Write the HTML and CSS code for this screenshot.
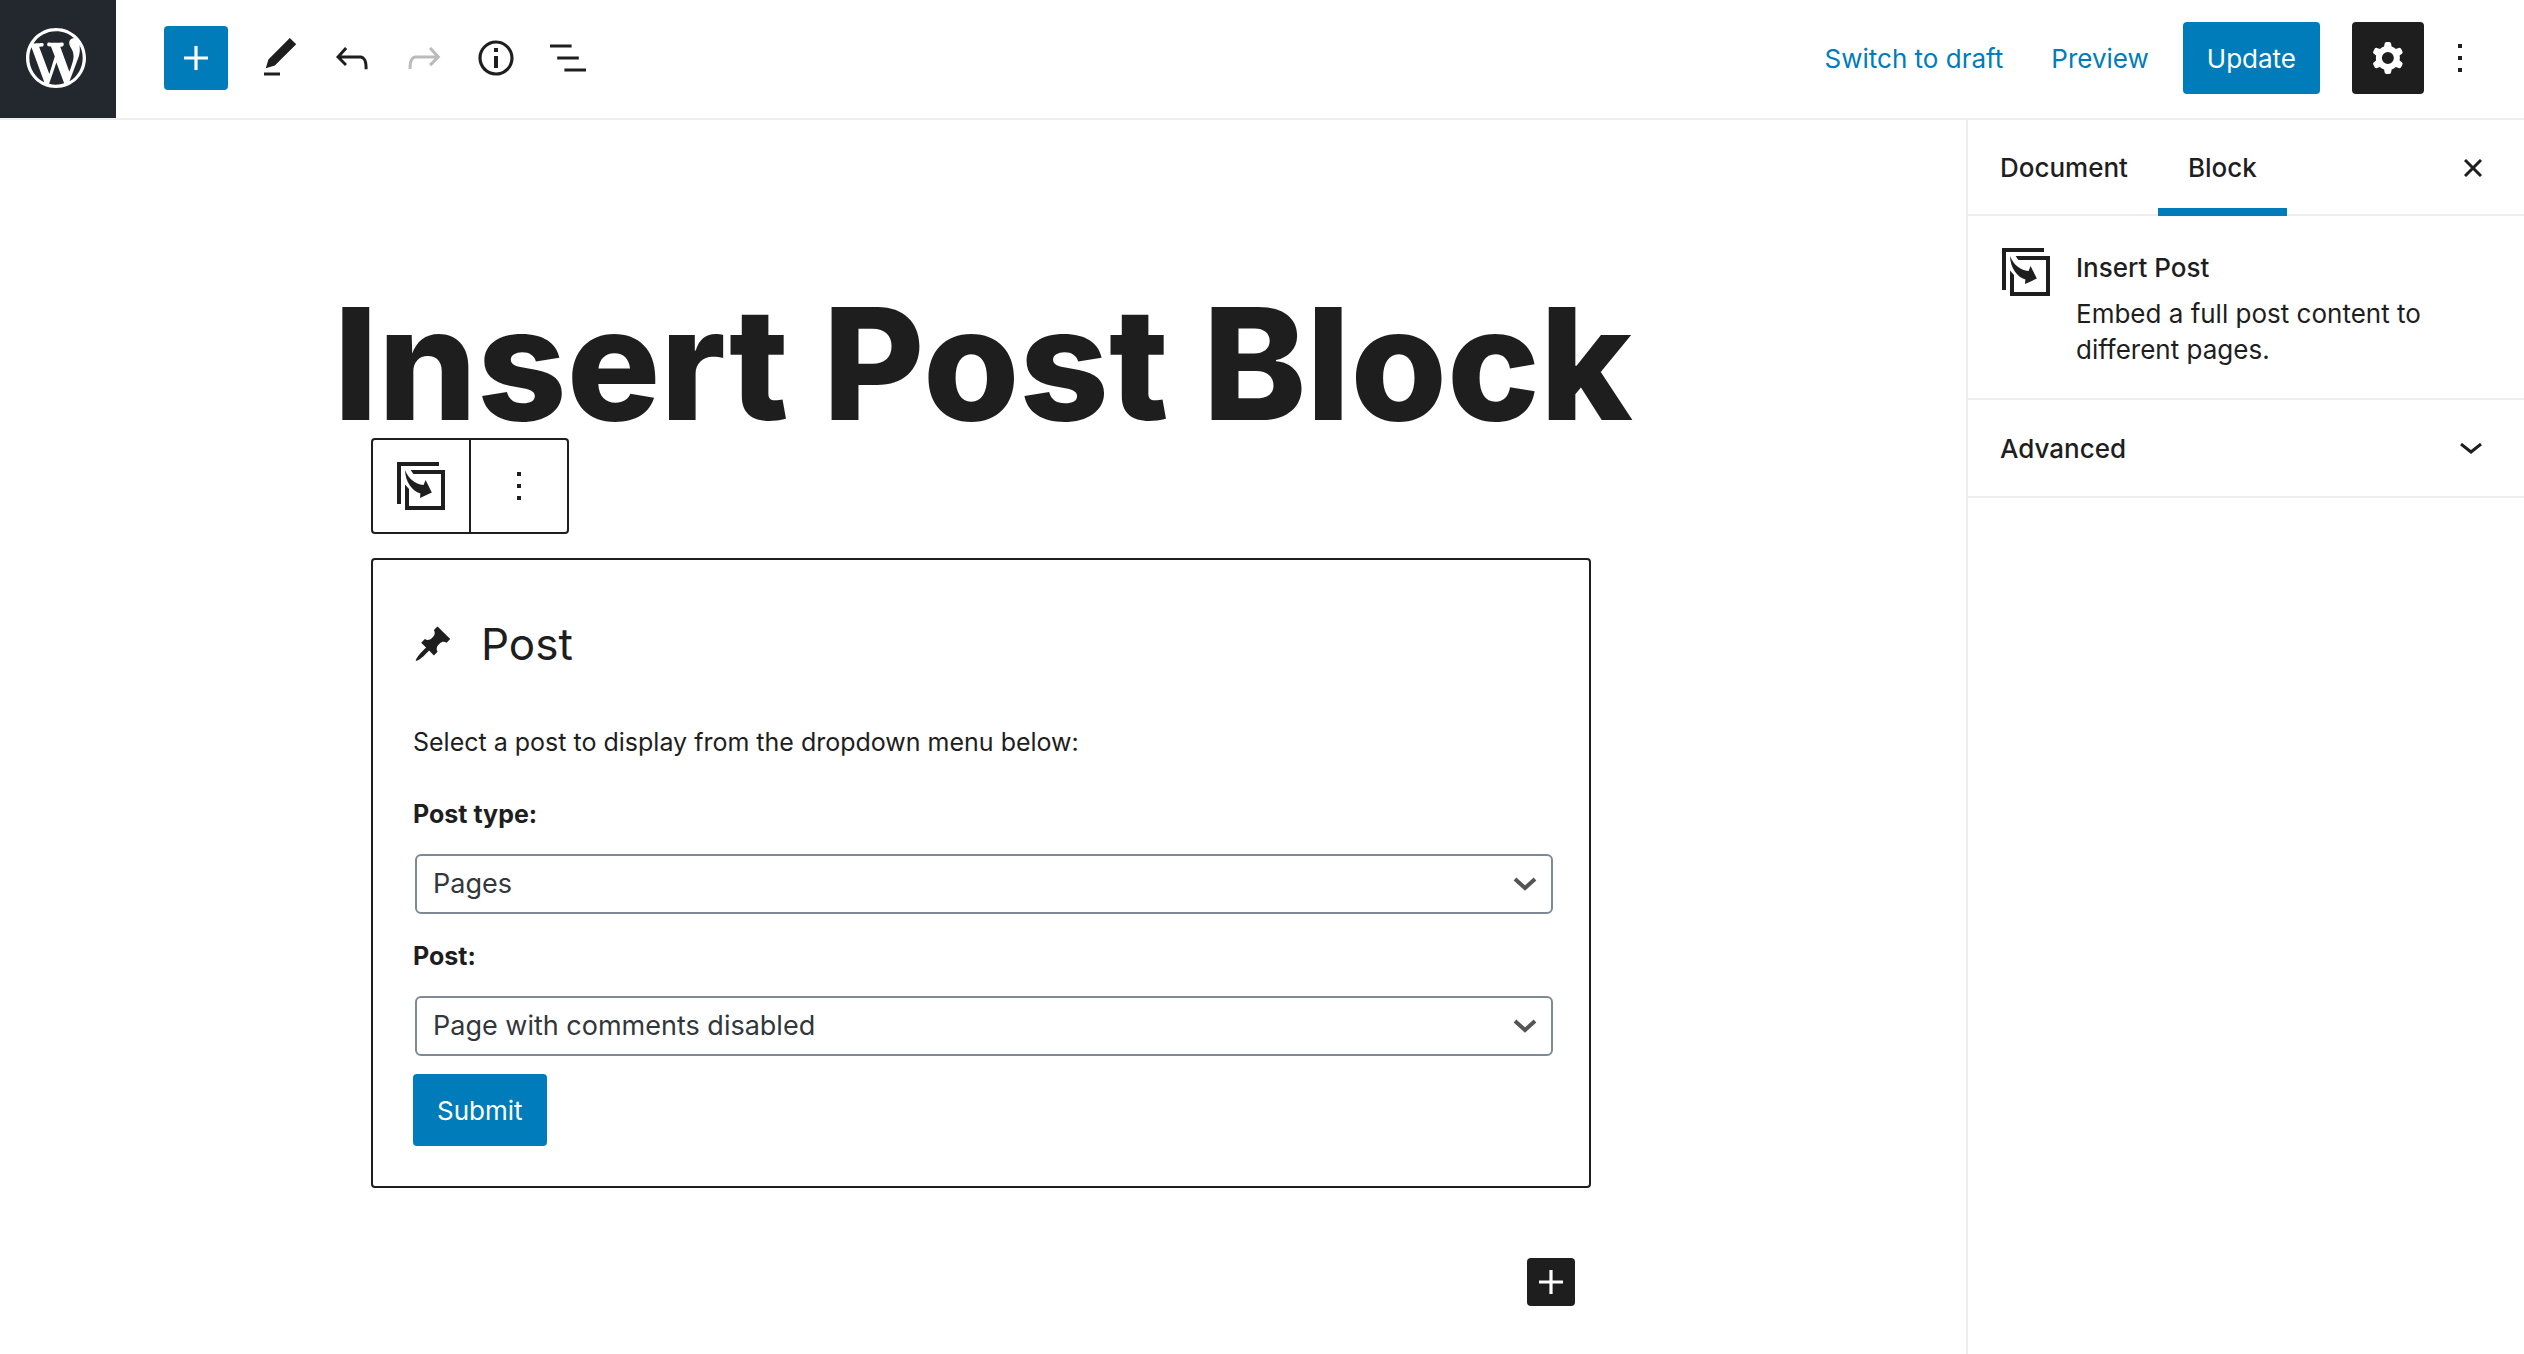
FILE: index.html
```html
<!DOCTYPE html>
<html lang="en">
<head>
<meta charset="utf-8">
<title>Edit Page</title>
<link rel="stylesheet" href="styles.css">
</head>
<body>
<svg class="sprite" aria-hidden="true">
  <symbol id="plus" viewBox="0 0 24 24"><path d="M18 11.2h-5.2V6h-1.6v5.2H6v1.6h5.2V18h1.6v-5.2H18z"/></symbol>
  <symbol id="dots" viewBox="0 0 24 24"><path d="M13 19h-2v-2h2v2zm0-6h-2v-2h2v2zm0-6h-2V5h2v2z"/></symbol>
  <symbol id="insert-post" viewBox="0 0 24 24">
    <path d="M0 0h21v2H2v19H0z"/>
    <path d="M6.8 4H24v20H4V11.300l2 2.200V22h16V6H8.200z"/>
    <path d="M4 4c1.700 4.300 4.800 7 9.300 7.500l1-2.500 3.100 6.300-5.900 2.700.2-2.300C7.500 14.500 4.200 10 4 4z"/>
  </symbol>
</svg>
<header class="header">
  <a class="logo" href="#" aria-label="View pages">
    <svg viewBox="-2 -2 24 24"><path d="M20 10c0-5.510-4.490-10-10-10C4.480 0 0 4.490 0 10c0 5.520 4.480 10 10 10 5.510 0 10-4.480 10-10zM7.780 15.370L4.370 6.220c.55-.02 1.170-.08 1.170-.08.5-.06.44-1.130-.06-1.110 0 0-1.450.11-2.370.11-.18 0-.37 0-.58-.01C4.120 2.690 6.870 1.110 10 1.110c2.330 0 4.450.87 6.050 2.340-.68-.11-1.650.39-1.650 1.580 0 .74.45 1.360.9 2.100.35.61.55 1.360.55 2.460 0 1.490-1.400 5-1.400 5l-3.030-8.370c.54-.02.82-.17.82-.17.5-.05.44-1.250-.06-1.220 0 0-1.440.12-2.380.12-.87 0-2.330-.12-2.330-.12-.5-.03-.56 1.200-.06 1.220l.92.08 1.260 3.410zM17.410 10c.24-.64.74-1.870.43-4.250.7 1.290 1.050 2.710 1.050 4.250 0 3.290-1.730 6.240-4.400 7.780.97-2.590 1.940-5.200 2.920-7.780zM6.100 18.090C3.120 16.650 1.110 13.530 1.110 10c0-1.300.23-2.480.72-3.590C3.250 10.300 4.670 14.200 6.100 18.090zm4.030-6.630l2.580 6.980c-.86.29-1.760.45-2.710.45-.79 0-1.570-.11-2.290-.33.81-2.380 1.620-4.740 2.420-7.100z"/></svg>
  </a>
  <div class="tools">
    <button class="add" aria-label="Add block"><svg class="icon"><use href="#plus"/></svg></button>
    <button class="tool" aria-label="Tools"><svg class="icon" viewBox="0 0 24 24"><path d="M20.100 5.100L16.900 2 6.200 12.700l-1.300 4.400 4.500-1.300L20.100 5.100zM4 20.800h8v-1.500H4v1.500z"/></svg></button>
    <button class="tool" aria-label="Undo"><svg class="icon" viewBox="0 0 24 24"><path d="M18.300 11.700c-.6-.6-1.400-.9-2.300-.9H6.700l2.900-3.300-1.100-1-4.500 5L8.500 16l1-1-2.700-2.700H16c.5 0 .9.2 1.300.5 1 1 1 3.400 1 4.500v.3h1.500v-.2c0-1.500 0-4.300-1.500-5.700z"/></svg></button>
    <button class="tool" aria-label="Redo" disabled><svg class="icon" viewBox="0 0 24 24"><path d="M15.600 6.500l-1.100 1 2.900 3.300H8c-.9 0-1.700.3-2.300.9-1.400 1.500-1.400 4.200-1.400 5.600v.2h1.500v-.3c0-1.100 0-3.500 1-4.500.3-.3.7-.5 1.300-.5h9.200L14.500 15l1.100 1.100 4.600-4.600-4.600-5z"/></svg></button>
    <button class="tool" aria-label="Content structure"><svg class="icon" viewBox="0 0 24 24"><path d="M12 3.200c-4.800 0-8.800 3.900-8.800 8.800 0 4.800 3.900 8.800 8.800 8.800 4.800 0 8.800-3.900 8.800-8.800 0-4.800-4-8.800-8.800-8.800zm0 16c-4 0-7.200-3.300-7.200-7.200C4.800 8 8 4.800 12 4.800s7.200 3.300 7.200 7.200c0 4-3.200 7.200-7.200 7.200zM11 17h2v-6h-2v6zm0-8h2V7h-2v2z"/></svg></button>
    <button class="tool" aria-label="Block navigation"><svg class="icon" viewBox="0 0 24 24"><path d="M13.800 5.200H3v1.500h10.800V5.200zm-3.600 12v1.500H21v-1.500H10.200zm7.200-6H6.600v1.500h10.800v-1.500z"/></svg></button>
  </div>
  <div class="actions">
    <button class="text-button">Switch to draft</button>
    <button class="text-button">Preview</button>
    <button class="primary">Update</button>
    <button class="settings" aria-label="Settings"><svg class="icon" viewBox="0 0 24 24"><path fill-rule="evenodd" d="M10.289 4.836A1 1 0 0111.275 4h1.306a1 1 0 01.987.836l.244 1.466c.787.26 1.503.679 2.108 1.218l1.393-.522a1 1 0 011.216.437l.653 1.130a1 1 0 01-.23 1.273l-1.148.944a6.025 6.025 0 010 2.435l1.149.946a1 1 0 01.23 1.272l-.653 1.130a1 1 0 01-1.216.437l-1.394-.522c-.605.54-1.320.958-2.108 1.218l-.244 1.466a1 1 0 01-.987.836h-1.306a1 1 0 01-.986-.836l-.244-1.466a5.995 5.995 0 01-2.108-1.218l-1.394.522a1 1 0 01-1.217-.436l-.653-1.131a1 1 0 01.23-1.272l1.149-.946a6.026 6.026 0 010-2.435l-1.148-.944a1 1 0 01-.23-1.272l.653-1.131a1 1 0 011.217-.437l1.393.522a5.994 5.994 0 012.108-1.218l.244-1.466zM14.929 12a3 3 0 11-6 0 3 3 0 016 0z"/></svg></button>
    <button class="tool" aria-label="More tools"><svg class="icon"><use href="#dots"/></svg></button>
  </div>
</header>
<div class="body">
  <main class="editor">
    <h1 class="title">Insert Post Block</h1>
    <div class="content">
      <div class="toolbar">
        <button class="toolbar-button" aria-label="Insert Post"><svg class="icon"><use href="#insert-post"/></svg></button>
        <button class="toolbar-button" aria-label="More options"><svg class="icon"><use href="#dots"/></svg></button>
      </div>
      <form class="block" onsubmit="return false">
        <h2 class="block-title">
          <svg class="pin" viewBox="0 0 20 20" aria-hidden="true"><path d="M10.440 3.020l1.820-1.820 6.360 6.350-1.830 1.820c-1.050-.68-2.480-.57-3.410.36l-.75.75c-.92.93-1.040 2.350-.35 3.410l-1.830 1.820-2.410-2.410-2.800 2.790c-.42.42-3.380 2.710-3.800 2.290s1.860-3.390 2.280-3.810l2.790-2.790L4.100 9.360l1.830-1.820c1.050.69 2.480.57 3.400-.36l.75-.75c.93-.92 1.050-2.350.36-3.410z"/></svg>
          <span>Post</span>
        </h2>
        <p class="hint">Select a post to display from the dropdown menu below:</p>
        <div class="field">
          <label class="label" for="post-type">Post type:</label>
          <div class="select-wrap">
            <select class="select" id="post-type"><option>Pages</option></select>
            <svg class="chevron" viewBox="0 0 24 14" aria-hidden="true"><path d="M2 2l10 9 10-9"/></svg>
          </div>
        </div>
        <div class="field">
          <label class="label" for="post">Post:</label>
          <div class="select-wrap">
            <select class="select" id="post"><option>Page with comments disabled</option></select>
            <svg class="chevron" viewBox="0 0 24 14" aria-hidden="true"><path d="M2 2l10 9 10-9"/></svg>
          </div>
        </div>
        <button class="primary">Submit</button>
      </form>
      <button class="appender" aria-label="Add block"><svg class="icon"><use href="#plus"/></svg></button>
    </div>
  </main>
  <aside class="sidebar">
    <div class="tabs">
      <button class="tab">Document</button>
      <button class="tab tab-active">Block</button>
      <button class="close" aria-label="Close settings"><svg viewBox="0 0 18 18"><path d="M1 1l16 16M17 1L1 17"/></svg></button>
    </div>
    <section class="card">
      <svg class="icon"><use href="#insert-post"/></svg>
      <div class="card-body">
        <h2 class="card-title">Insert Post</h2>
        <p>Embed a full post content to different pages.</p>
      </div>
    </section>
    <button class="panel">
      <span>Advanced</span>
      <svg viewBox="0 0 22 12"><path d="M1 1l10 8 10-8"/></svg>
    </button>
  </aside>
</div>
</body>
</html>
```
FILE: styles.css
```css
* {
  box-sizing: border-box;
}

body {
  margin: 0;
  min-height: 100vh;
  display: flex;
  flex-direction: column;
  background: #fff;
  color: #1e1e1e;
  font: 26px/36px Inter, "Liberation Sans", sans-serif;
}

h1, h2, p {
  margin: 0;
}

button {
  margin: 0;
  padding: 0;
  border: 0;
  background: none;
  color: inherit;
  font: inherit;
  cursor: pointer;
}

svg {
  display: block;
  fill: currentColor;
}

.sprite {
  position: absolute;
  width: 0;
  height: 0;
}

.icon {
  width: 48px;
  height: 48px;
  flex: none;
}

.header {
  display: flex;
  align-items: center;
  border-bottom: 2px solid #eee;
  padding-right: 28px;
}

.logo {
  padding: 22px 24px 24px 20px;
  background: #23282e;
  color: #fff;
}

.logo svg {
  width: 72px;
  height: 72px;
}

.tools,
.actions {
  display: flex;
  align-items: center;
  padding-bottom: 2px;
}

.tools {
  margin-left: 48px;
}

.actions {
  margin-left: auto;
}

.add {
  display: grid;
  place-items: center;
  width: 64px;
  height: 64px;
  margin-right: 16px;
  border-radius: 4px;
  background: #007cba;
  color: #fff;
}

.tool {
  display: grid;
  place-items: center;
  width: 72px;
  height: 72px;
}

.tool:disabled {
  color: #bbb;
}

.text-button {
  padding: 2px 24px 0;
  color: #007cba;
}

.primary {
  height: 72px;
  padding: 2px 24px 0;
  border-radius: 4px;
  background: #007cba;
  color: #fff;
}

.actions .primary {
  margin: 0 32px 0 10px;
}

.settings {
  display: grid;
  place-items: center;
  width: 72px;
  height: 72px;
  border-radius: 4px;
  background: #1e1e1e;
  color: #fff;
}

.body {
  flex: 1;
  display: flex;
}

.editor {
  flex: 1;
  display: flex;
  flex-direction: column;
  align-items: center;
  padding: 170px 0 48px;
}

.title {
  font-size: 156px;
  line-height: 148px;
  font-weight: 800;
  white-space: nowrap;
}

.content {
  width: 1220px;
  max-width: 100%;
  margin-right: 4px;
}

.toolbar {
  display: flex;
  width: 198px;
  height: 96px;
  border: 2px solid #1e1e1e;
  border-radius: 4px;
}

.toolbar-button {
  flex: 1;
  display: grid;
  place-items: center;
}

.toolbar-button + .toolbar-button {
  border-left: 2px solid #1e1e1e;
}

.block {
  margin-top: 24px;
  padding: 60px 36px 40px 40px;
  border: 2px solid #1e1e1e;
  border-radius: 4px;
  font-size: 25px;
}

.block-title {
  display: flex;
  align-items: center;
  gap: 28px;
  font-size: 44px;
  line-height: 48px;
  font-weight: 400;
}

.pin {
  width: 40px;
  height: 40px;
}

.hint {
  margin-top: 56px;
}

.hint + .field {
  margin-top: 36px;
}

.field {
  margin-top: 24px;
}

.label {
  display: block;
  font-weight: 700;
}

.select-wrap {
  display: grid;
  align-items: center;
  margin-top: 22px;
  padding: 0 0 0 2px;
}

.select-wrap > * {
  grid-area: 1 / 1;
}

.select {
  width: 100%;
  height: 60px;
  margin: 0;
  padding: 0 16px;
  border: 2px solid #7e8993;
  border-radius: 6px;
  background: #fff;
  color: #32373c;
  font: 27px/56px Inter, "Liberation Sans", sans-serif;
  appearance: none;
}

.chevron {
  justify-self: end;
  width: 24px;
  height: 14px;
  margin-right: 16px;
  fill: none;
  stroke: #555;
  stroke-width: 4;
  pointer-events: none;
}

.block .primary {
  margin-top: 18px;
  font-size: 26px;
}

.appender {
  display: grid;
  place-items: center;
  width: 48px;
  height: 48px;
  margin: 70px 16px 0 auto;
  border-radius: 4px;
  background: #1e1e1e;
  color: #fff;
}

.sidebar {
  width: 558px;
  border-left: 2px solid #eee;
}

.tabs {
  display: flex;
  height: 96px;
  padding-left: 2px;
  box-shadow: inset 0 -2px #eee;
}

.tab {
  padding: 0 30px;
  font-weight: 500;
}

.tab-active {
  box-shadow: inset 0 -8px #007cba;
}

.close {
  margin-left: auto;
  padding: 0 42px;
}

.close svg {
  width: 18px;
  height: 18px;
  stroke: #1e1e1e;
  stroke-width: 3;
}

.card {
  display: flex;
  gap: 26px;
  padding: 32px 34px 30px;
  border-bottom: 2px solid #eee;
}

.card-body {
  padding-top: 2px;
}

.card-title {
  margin: 0 0 10px;
  font-size: 26px;
  line-height: 36px;
  font-weight: 500;
}

.panel {
  display: flex;
  align-items: center;
  justify-content: space-between;
  width: 100%;
  height: 98px;
  padding: 2px 42px 0 32px;
  border-bottom: 2px solid #eee;
  font-weight: 500;
}

.panel svg {
  width: 22px;
  height: 12px;
  fill: none;
  stroke: #1e1e1e;
  stroke-width: 3;
}
```
